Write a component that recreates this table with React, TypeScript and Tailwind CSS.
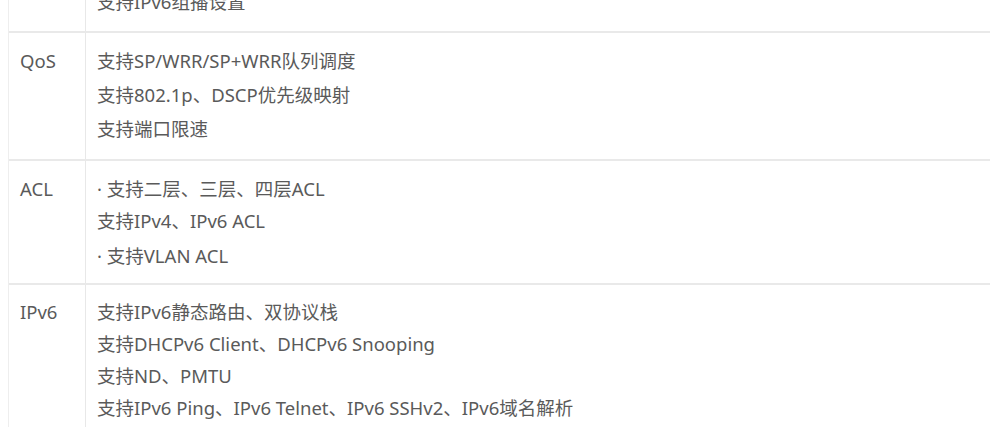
import React from "react";

type Row = {
  label: string;
  lines: { text: string; h: number }[];
  pt: string;
  pb: string;
};

const rows: Row[] = [
  {
    label: "QoS",
    pt: "pt-[12px]",
    pb: "pb-[14px]",
    lines: [
      { text: "支持SP/WRR/SP+WRR队列调度", h: 34 },
      { text: "支持802.1p、DSCP优先级映射", h: 34 },
      { text: "支持端口限速", h: 32 },
    ],
  },
  {
    label: "ACL",
    pt: "pt-[12px]",
    pb: "pb-[11px]",
    lines: [
      { text: "· 支持二层、三层、四层ACL", h: 32 },
      { text: "支持IPv4、IPv6 ACL", h: 35 },
      { text: "· 支持VLAN ACL", h: 32 },
    ],
  },
  {
    label: "IPv6",
    pt: "pt-[11px]",
    pb: "pb-[12px]",
    lines: [
      { text: "支持IPv6静态路由、双协议栈", h: 32 },
      { text: "支持DHCPv6 Client、DHCPv6 Snooping", h: 32 },
      { text: "支持ND、PMTU", h: 32 },
      { text: "支持IPv6 Ping、IPv6 Telnet、IPv6 SSHv2、IPv6域名解析", h: 32 },
    ],
  },
];

const App = () => {
  return (
    <div
      className="w-[990px] h-[427px] overflow-hidden bg-white text-[#5a5a5a] text-[18.5px]"
      style={{ fontFamily: '"Noto Sans", "Noto Sans CJK SC", sans-serif' }}
    >
      <div className="ml-[8px] border-l border-[#eeeeee]">
        {/* 上一行（被截断） */}
        <div className="flex -mt-[14px] border-b-2 border-[#e9e9e9]">
          <div className="w-[77px] shrink-0 border-r border-[#e8e8e8]" />
          <div className="pl-[11px] pb-[13px]">
            <div className="h-[32px] leading-[32px]">支持IPv6组播设置</div>
          </div>
        </div>

        {rows.map((row) => (
          <div key={row.label} className="flex border-b-2 border-[#e9e9e9]">
            <div
              className={`w-[77px] shrink-0 border-r border-[#e8e8e8] pl-[11px] ${row.pt}`}
            >
              <div className="h-[32px] leading-[32px]">{row.label}</div>
            </div>
            <div className={`pl-[11px] ${row.pt} ${row.pb}`}>
              {row.lines.map((line, i) => (
                <div
                  key={i}
                  className="whitespace-nowrap"
                  style={{ height: line.h, lineHeight: "32px" }}
                >
                  {line.text}
                </div>
              ))}
            </div>
          </div>
        ))}
      </div>
    </div>
  );
};

export default App;
